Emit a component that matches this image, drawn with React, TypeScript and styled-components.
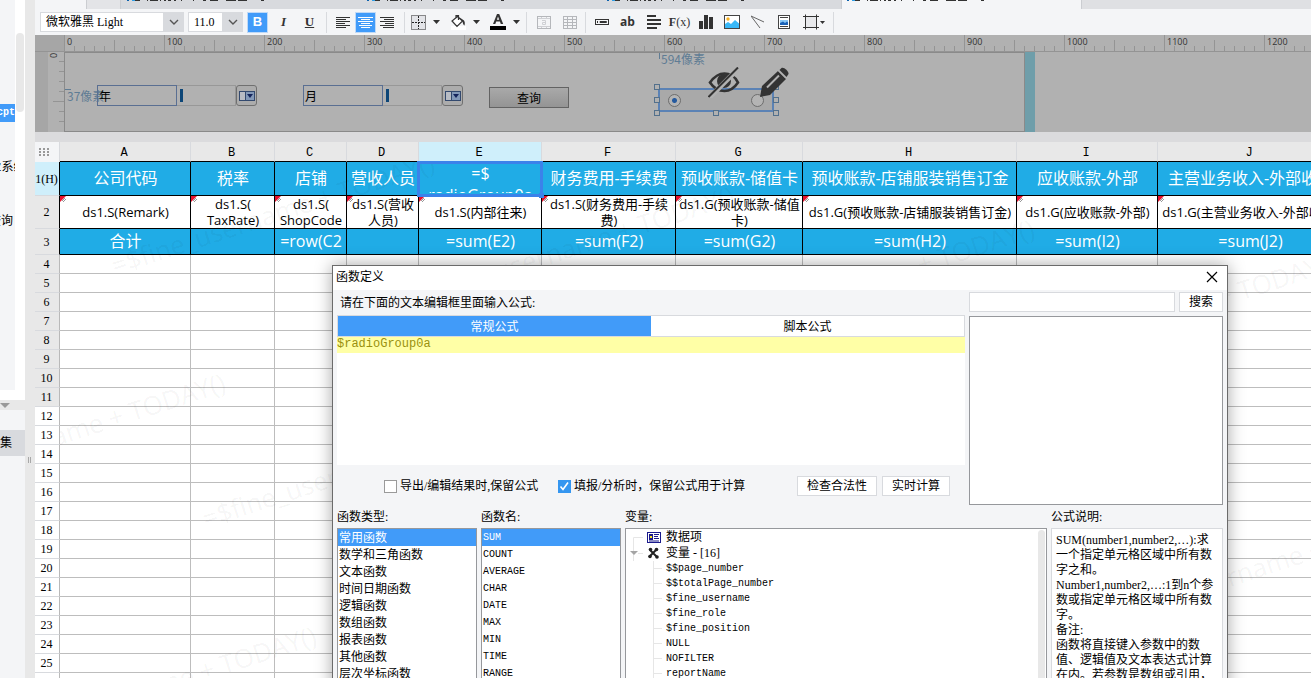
import React from "react";
import styled, { createGlobalStyle, css } from "styled-components";

const uiFont = `"Liberation Serif", "Noto Sans CJK SC", serif`;
const cjkFont = `"Noto Sans CJK SC", "Liberation Sans", sans-serif`;
const monoFont = `"Liberation Mono", "Noto Sans CJK SC", monospace`;
const sheetFont = `"Open Sans", "Noto Sans CJK SC", sans-serif`;

const c = {
  blue: "#419bf9",
  cell: "#20ace6",
  panel: "#f4f5f7",
  line: "#d8dade",
  gutter: "#e8e8e8",
  canvas: "#b1b1b1",
  tick: "#949494",
  steel: "#5a6f92",
};

const Global = createGlobalStyle`
  *, *::before, *::after { box-sizing: border-box; }
  body { margin: 0; overflow: hidden; font: 12px/16px ${uiFont}; color: #000; background: ${c.panel}; }
  button, input, select, textarea { font: inherit; color: inherit; margin: 0; padding: 0; border-radius: 0; outline: none; }
  ul { list-style: none; margin: 0; padding: 0; }
`;

const Shell = styled.div`
  position: relative;
  display: flex;
  height: 100vh;
  overflow: hidden;
`;

/* ---------- left side ---------- */

const Side = styled.aside`
  flex: 0 0 25px;
  display: flex;
  flex-direction: column;
  overflow: hidden;
  white-space: nowrap;
`;
const FileArea = styled.div`
  flex: 0 0 400px;
  display: flex;
  background: #fff;
`;
const FileList = styled.ul`
  flex: 0 0 15px;
  min-width: 0;
  display: flex;
  flex-direction: column;
  gap: 36px;
  height: 390px;
  padding-top: 104px;
  overflow: hidden;
  background: ${c.panel};
`;
const FileRow = styled.li<{ $on?: boolean; $end?: boolean }>`
  display: flex;
  justify-content: ${(p) => (p.$end ? "flex-end" : "center")};
  height: 18px;
  padding-right: ${(p) => (p.$end && !p.$on ? 2 : 0)}px;
  line-height: 18px;
  overflow: hidden;
  ${(p) => p.$on && css`background: ${c.blue}; color: #fff; font: bold 10px/18px ${monoFont};`}
`;
const FileScroll = styled.div`
  flex: 1;
  padding: 33px 1px 0;
  &::before {
    content: "";
    display: block;
    height: 79px;
    border-radius: 4px;
    background: ${c.gutter};
  }
`;
const SideSplit = styled.div`
  flex: 0 0 10px;
  background: ${c.gutter};
  svg { display: block; }
`;
const DataArea = styled.div`
  flex: 1;
  padding-top: 20px;
  background: ${c.panel};
`;
const DataTab = styled.div`
  display: flex;
  justify-content: flex-end;
  padding-right: 13px;
  line-height: 26px;
  background: ${c.line};
`;
const Splitter = styled.div`
  flex: 0 0 10px;
  padding: 457px 0 0 3px;
  background: ${c.gutter};
  &::before {
    content: "";
    display: block;
    width: 3px;
    height: 6px;
    border: solid #a8a8a8;
    border-width: 0 1px;
  }
`;

/* ---------- top bars ---------- */

const Main = styled.main`
  flex: 1;
  min-width: 0;
  display: flex;
  flex-direction: column;
  overflow: hidden;
`;
const TabStrip = styled.div`
  flex: 0 0 9px;
  display: flex;
  background: #dfe0e3;
`;
const Tab = styled.div<{ $w: number; $bg: string; $pad?: number }>`
  flex: 0 0 ${(p) => p.$w}px;
  display: flex;
  gap: 100px;
  padding-left: ${(p) => p.$pad ?? 0}px;
  overflow: hidden;
  background: ${(p) => p.$bg};
  border-right: 1px solid #cbcdd1;
  svg { display: block; flex: none; }
`;
const Toolbar = styled.div`
  flex: 0 0 26px;
  display: flex;
  align-items: center;
  padding-left: 5px;
  background: ${c.panel};
`;
const Combo = styled.label<{ $w: number }>`
  position: relative;
  flex: 0 0 ${(p) => p.$w}px;
  height: 20px;
  margin-right: 4px;
  select {
    appearance: none;
    display: block;
    width: 100%;
    height: 20px;
    padding: 0 20px 0 5px;
    border: 1px solid ${c.line};
    background: linear-gradient(to left, ${c.line} 20px, #fff 20px);
  }
  svg { position: absolute; right: 5px; top: 7px; pointer-events: none; }
`;
const Group = styled.div<{ $gap?: number; $pad?: string }>`
  display: flex;
  gap: ${(p) => p.$gap ?? 5}px;
  padding: ${(p) => p.$pad ?? "0 5px"};
  border-right: 1px solid ${c.line};
  height: 21px;
`;
const Tool = styled.button<{ $on?: boolean; $w?: number; $face?: string }>`
  display: flex;
  align-items: center;
  justify-content: center;
  gap: 7px;
  width: ${(p) => p.$w ?? 21}px;
  height: 21px;
  border: 1px solid ${(p) => (p.$on ? "#bfd9f7" : "transparent")};
  background: ${(p) => (p.$on ? c.blue : "transparent")};
  color: ${(p) => (p.$on ? "#fff" : "#333")};
  font: ${(p) => p.$face ?? `bold 13px/16px ${uiFont}`};
`;

/* ---------- parameter pane ---------- */

const Pane = styled.section`
  flex: 0 0 97px;
  display: flex;
  flex-direction: column;
  background: ${c.canvas};
  svg { display: block; }
`;
const PaneBody = styled.div`
  flex: 1;
  display: flex;
`;
const Margin = styled.div`
  flex: 0 0 13px;
  background: #a6a6a6;
`;
const Canvas = styled.div`
  position: relative;
  flex: 0 0 961px;
  border: 1px solid #8a8a8a;
  font-family: ${cjkFont};
`;
const Resize = styled.div`
  flex: 0 0 10px;
  background: #6f9eaa;
`;
const Placed = styled.div<{ $x: number; $y: number }>`
  position: absolute;
  left: ${(p) => p.$x}px;
  top: ${(p) => p.$y}px;
  display: flex;
`;
const Size = styled(Placed)<{ $side: "top" | "left" }>`
  padding-left: 2px;
  color: #5f7c94;
  line-height: 14px;
  &::before {
    content: "";
    position: absolute;
    left: 0;
    top: ${(p) => (p.$side === "top" ? 1 : 0)}px;
    width: ${(p) => (p.$side === "top" ? 1 : 6)}px;
    height: ${(p) => (p.$side === "top" ? 6 : 1)}px;
    background: #5f7c94;
  }
`;
const LabelBox = styled.label`
  width: 80px;
  height: 21px;
  padding-left: 1px;
  border: 1px solid ${c.steel};
  font-size: 12px;
  line-height: 20px;
`;
const Field = styled.input`
  width: 59px;
  height: 21px;
  border: 1px solid #989898;
  border-left-width: 0;
  background: linear-gradient(#0d4677, #0d4677) 3px 3px / 3px 13px no-repeat;
`;
const Drop = styled.button`
  display: flex;
  align-items: center;
  justify-content: center;
  width: 21px;
  height: 21px;
  border: 1px solid #707070;
  border-radius: 3px;
  background: #acacac;
`;
const Query = styled.button`
  width: 80px;
  height: 21px;
  border: 1px solid #636363;
  background: linear-gradient(#a9a9a9, #949494);
`;
const Radios = styled.div`
  position: relative;
  display: flex;
  align-items: center;
  justify-content: space-between;
  width: 116px;
  height: 24px;
  padding: 0 8px;
  border: 2px solid #5b82b5;
  background: #a9a9a9;
`;
const Radio = styled.input`
  appearance: none;
  width: 13px;
  height: 13px;
  border: 1px solid #6d6d6d;
  border-radius: 50%;
  background: #b4b4b4;
  &:checked { background: radial-gradient(circle, #265a9e 2px, #b4b4b4 3px); }
`;
const Handle = styled.i<{ $x: number; $y: number }>`
  position: absolute;
  left: ${(p) => p.$x}px;
  top: ${(p) => p.$y}px;
  width: 6px;
  height: 6px;
  border: 1px solid #53708c;
  background: #b1b1b1;
`;

/* ---------- sheet ---------- */

const Sheet = styled.section`
  position: relative;
  flex: 1;
  min-height: 0;
  overflow: hidden;
  padding-top: 10px;
  background: linear-gradient(#dbdbdd 10px, #fff 10px);
`;
const Grid = styled.table`
  table-layout: fixed;
  width: 1308px;
  border-collapse: separate;
  border-spacing: 0;
  th, td { padding: 0; }
`;
const ColHead = styled.th<{ $on?: boolean }>`
  && { padding: 4px 2px 0 0; }
  height: 20px;
  font: 12px/15px "Liberation Mono", monospace;
  border-right: 1px solid ${c.line};
  border-bottom: 1px solid #000;
  background: ${(p) => (p.$on ? "#cfeffb" : c.gutter)};
`;
const Corner = styled.th`
  height: 20px;
  border-right: 1px solid ${c.line};
  background: ${c.panel};
  svg { display: block; margin: 0 0 0 4px; }
`;
const RowHead = styled.th<{ $bg: string; $h: number; $dark?: boolean }>`
  && { padding-right: 1px; }
  height: ${(p) => p.$h}px;
  font-weight: 400;
  line-height: 16px;
  border-right: 1px solid ${(p) => (p.$dark ? "#000" : "#b9b9b9")};
  border-bottom: 1px solid ${c.line};
  background: ${(p) => p.$bg};
`;
const Cell = styled.td<{ $kind: "head" | "data" | "sum" | "blank" }>`
  position: relative;
  border: solid ${(p) => (p.$kind === "blank" ? "#bdbdbd" : "#000")};
  border-width: 0 1px 1px 0;
  text-align: center;
  vertical-align: middle;
  ${(p) =>
    (p.$kind === "head" || p.$kind === "sum") &&
    css`&& { padding-bottom: 2px; } background: ${c.cell}; color: #fff; font: 16px/22px ${sheetFont};`}
  ${(p) => p.$kind === "data" && css`font: 13px/16px ${sheetFont};`}
`;
const CellText = styled.div<{ $max: number }>`
  max-height: ${(p) => p.$max}px;
  padding-left: 1px;
  overflow: hidden;
  white-space: pre;
`;
const Mark = styled.svg`
  position: absolute;
  left: 0;
  top: 0;
`;
const Selected = styled.div`
  position: absolute;
  inset: -1px -2px -2px -2px;
  border: 3px solid #3b82ea;
  z-index: 2;
  &::after {
    content: "";
    position: absolute;
    right: -4px;
    bottom: -4px;
    width: 5px;
    height: 5px;
    background: #3b82ea;
  }
`;
const Marks = styled.div`
  position: absolute;
  inset: 29px 0 0 25px;
  overflow: hidden;
  pointer-events: none;
`;
const Watermark = styled.span<{ $x: number; $y: number }>`
  position: absolute;
  left: ${(p) => p.$x}px;
  top: ${(p) => p.$y}px;
  font: 26px/26px "Open Sans", sans-serif;
  color: rgba(0, 0, 0, 0.05);
  white-space: nowrap;
  transform: rotate(-18deg);
  transform-origin: 0 100%;
`;

/* ---------- dialog ---------- */

const Dialog = styled.section`
  position: absolute;
  left: 332px;
  top: 265px;
  width: 896px;
  border: 1px solid #6b6b6b;
  background: ${c.panel};
  box-shadow: 0 0 16px rgba(0, 0, 0, 0.35);
`;
const TitleBar = styled.header`
  display: flex;
  align-items: center;
  justify-content: space-between;
  height: 24px;
  padding: 0 9px 2px 3px;
  background: #fff;
`;
const Close = styled.button`
  display: flex;
  border: 0;
  background: none;
`;
const Upper = styled.div`
  display: flex;
  gap: 4px;
  height: 215px;
  padding: 0 4px;
`;
const EditCol = styled.div`
  flex: 1;
  display: flex;
  flex-direction: column;
`;
const Prompt = styled.label`
  flex: 0 0 25px;
  min-height: 0;
  height: 25px;
  padding-left: 3px;
  line-height: 27px;
`;
const Tabs = styled.div`
  flex: 0 0 22px;
  display: flex;
  border: 1px solid ${c.line};
`;
const TabButton = styled.button<{ $on?: boolean }>`
  flex: 1;
  border: 0;
  padding-top: 2px;
  background: ${(p) => (p.$on ? c.blue : "#fff")};
  color: ${(p) => (p.$on ? "#fff" : "#000")};
`;
const Editor = styled.textarea`
  flex: 0 0 128px;
  display: block;
  border: 0;
  resize: none;
  color: #99910f;
  font: 12px/14px "Liberation Mono", monospace;
  background: linear-gradient(#ffffa6 16px, #fff 16px);
`;
const Options = styled.div`
  flex: 0 0 40px;
  display: flex;
  align-items: center;
  gap: 5px;
  padding: 2px 15px 0 47px;
`;
const Check = styled.label`
  display: flex;
  align-items: center;
  gap: 3px;
  flex: 0 0 169px;
  white-space: nowrap;
`;
const CheckWide = styled(Check)`
  flex: 1;
`;
const Tick = styled.input`
  appearance: none;
  width: 13px;
  height: 13px;
  border: 1px solid #9a9a9a;
  background: #fff;
  &:checked {
    border-color: #3596f0;
    background: #3596f0 url("data:image/svg+xml,%3Csvg xmlns='http://www.w3.org/2000/svg' viewBox='0 0 11 11'%3E%3Cpath d='M1.5 5.5l2.5 3 5-7' fill='none' stroke='white' stroke-width='1.6'/%3E%3C/svg%3E");
  }
`;
const Push = styled.button<{ $w: number }>`
  flex: 0 0 ${(p) => p.$w}px;
  height: 20px;
  border: 1px solid ${c.line};
  background: #fff;
  line-height: 16px;
`;
const SearchCol = styled.div`
  flex: 0 0 254px;
  display: flex;
  flex-direction: column;
  gap: 4px;
  padding-top: 2px;
`;
const SearchRow = styled.div`
  display: flex;
  gap: 4px;
`;
const SearchBox = styled.input`
  flex: 1;
  min-width: 0;
  height: 20px;
  border: 1px solid ${c.line};
  background: #fff;
`;
const Results = styled.div`
  height: 189px;
  border: 1px solid #96989c;
  background: #fff;
`;
const Lower = styled.div`
  display: grid;
  grid-template-columns: 140px 140px 1fr 172px;
  gap: 0 4px;
  padding: 0 4px;
`;
const Caption = styled.div`
  height: 23px;
  line-height: 25px;
`;
const List = styled.ul`
  height: 240px;
  overflow: hidden;
  border: 1px solid #96989c;
  background: #fff;
`;
const Item = styled.li<{ $on?: boolean; $latin?: boolean }>`
  height: 17px;
  padding-left: 1px;
  white-space: nowrap;
  line-height: 19px;
  ${(p) => p.$latin && css`font: 10px/17px ${monoFont};`}
  ${(p) => p.$on && css`background: ${c.blue}; color: #fff;`}
`;
const Tree = styled.div`
  display: flex;
  justify-content: space-between;
  height: 240px;
  overflow: hidden;
  border: 1px solid #96989c;
  background: #fff;
`;
const TreeRoot = styled.ul`
  padding-left: 3px;
`;
const Branch = styled.li`
  display: flex;
  align-items: center;
  gap: 5px;
  height: 16px;
  line-height: 18px;
  svg { display: block; }
`;
const Leaves = styled.ul`
  margin-left: 24px;
  border-left: 1px solid #e6e6e6;
`;
const Leaf = styled.li`
  display: flex;
  align-items: center;
  gap: 4px;
  font: 10px/15px ${monoFont};
  &::before {
    content: "";
    width: 8px;
    height: 1px;
    background: #e6e6e6;
  }
`;
const Thumb = styled.div`
  width: 7px;
  margin: 1px 1px 0;
  border-radius: 4px;
  background: ${c.gutter};
`;
const Explain = styled.div`
  height: 240px;
  padding: 4px;
  overflow: hidden;
  border: 1px solid ${c.line};
  background: #fff;
  line-height: 15px;
  white-space: pre;
`;

/* ---------- drawings ---------- */

const Chevron = () => (
  <svg width="10" height="7" viewBox="0 0 10 7">
    <path d="M1 1l4 4 4-4" fill="none" stroke="#555" strokeWidth="1.4" />
  </svg>
);
const Caret = () => (
  <svg width="7" height="4" viewBox="0 0 7 4">
    <path d="M0 0h7L3.500 4z" fill="#333" />
  </svg>
);
const Lines = ({ rows }: { rows: [number, number][] }) => (
  <svg width="15" height="11" viewBox="0 0 15 11" fill="currentColor">
    {rows.map(([x, w], i) => (
      <rect key={i} x={x} y={i * 2} width={w} height="1" />
    ))}
  </svg>
);
const left: [number, number][] = [[0, 14], [0, 10], [0, 14], [0, 9], [0, 14], [0, 10]];
const center: [number, number][] = [[0, 15], [3, 9], [0, 15], [3, 9], [1, 13], [3, 9]];
const right: [number, number][] = [[0, 14], [4, 10], [0, 14], [5, 9], [0, 14], [3, 11]];

const BorderIcon = () => (
  <svg width="15" height="15" viewBox="0 0 15 15" fill="none" stroke="#222">
    <rect x=".5" y=".5" width="14" height="14" fill="#e3e4e8" strokeDasharray="1 1" />
    <path d="M7.500 1v13M1 7.500h13" strokeDasharray="2 1" />
  </svg>
);
const BucketIcon = () => (
  <svg width="16" height="16" viewBox="0 0 16 16">
    <path d="M1 12h15v4H1z" fill="#fff" />
    <path d="M7.500 2.500L2 7l5 5.500 5.500-5.500zM6 5V1.500h2.500V6" fill="#fff" stroke="#333" strokeWidth="1.200" />
    <path d="M9 3l5 3.500c1 1.500 1 3 .5 5-1-.5-1.500-1.500-2-4z" fill="#333" />
  </svg>
);
const ColorIcon = () => (
  <svg width="16" height="16" viewBox="0 0 16 16" fill="#333">
    <path d="M3 10L7 0h2.200l4 10h-2.400l-.9-2.500H6.200L5.300 10zM6.900 5.800h2.300L8 2.500z" />
    <path d="M0 12h16v4H0z" fill="#000" />
  </svg>
);
const MergeIcon = () => (
  <svg width="14" height="13" viewBox="0 0 14 13" fill="none" stroke="#b5b7bb">
    <rect x=".5" y=".5" width="13" height="12" />
    <path d="M1 2.500h12M1 10.500h12M4.500 1v1M9.500 1v1M4.500 11v1M9.500 11v1" stroke="#cfd0d4" />
    <path d="M5 4.500h3.500v4H5.500v-2h3" stroke="#cfd0d4" />
  </svg>
);
const GridIcon = () => (
  <svg width="14" height="13" viewBox="0 0 14 13" fill="none" stroke="#b5b7bb">
    <rect x=".5" y=".5" width="13" height="12" />
    <path d="M1 3.500h12M1 6.500h12M1 9.500h12M4.500 1v11M9.500 1v11" />
  </svg>
);
const FieldIcon = () => (
  <svg width="14" height="6" viewBox="0 0 14 6" fill="none" stroke="#333">
    <rect x=".5" y=".5" width="13" height="5" />
    <path d="M2.500 2v2M5 2.500h6.500v1H5z" />
  </svg>
);
const ParaIcon = () => (
  <svg width="14" height="14" viewBox="0 0 14 14" fill="#333">
    <path d="M0 0h9v2H0zM0 4h14v2H0zM0 8h14v2H0zM0 12h10v2H0z" />
  </svg>
);
const BarsIcon = () => (
  <svg width="14" height="14" viewBox="0 0 14 14" fill="#333">
    <path d="M0 6h4v8H0zM5 0h4v14H5zM10 2h4v12h-4z" />
  </svg>
);
const ImageIcon = () => (
  <svg width="16" height="14" viewBox="0 0 16 14">
    <rect x=".5" y=".5" width="15" height="13" fill="#fff" stroke="#444" />
    <circle cx="4" cy="4" r="1.700" fill="#f5b021" />
    <path d="M1 13V9l3-2 3 2 4-4 4 3.500V13z" fill="#38b8f8" />
  </svg>
);
const SlashIcon = () => (
  <svg width="14" height="14" viewBox="0 0 14 14" fill="none" stroke="#666">
    <path d="M0 1l13 6M0 1l9 12" />
  </svg>
);
const DocIcon = () => (
  <svg width="12" height="14" viewBox="0 0 12 14">
    <rect x=".5" y=".5" width="11" height="13" fill="#fff" stroke="#444" />
    <path d="M2 2.500h8M2 11.500h8" stroke="#444" />
    <path d="M2 5h8v5H2z" fill="#8ac8f6" />
    <path d="M2 10V8l3-1.500L7 8l2-1.500 1 1V10z" fill="#1a62b8" />
  </svg>
);
const FrameIcon = () => (
  <svg width="22" height="16" viewBox="0 0 22 16">
    <path d="M2.500.5v15M13.500.5v15M0 2.500h16M0 13.500h16" stroke="#333" />
    <path d="M3 3h10v10H3z" fill="#e8e9ec" />
    <path d="M17 7h5l-2.500 3z" fill="#333" />
  </svg>
);
const DropIcon = () => (
  <svg width="16" height="10" viewBox="0 0 16 10">
    <rect x=".5" y=".5" width="15" height="9" fill="#b8bcc4" stroke="#33496e" />
    <path d="M6 1h9v8H6z" fill="#8298b8" />
    <path d="M6.500 1v8" stroke="#33496e" />
    <path d="M8 3h6l-3 4z" fill="#14245c" />
  </svg>
);
const EyeOff = () => (
  <svg width="32" height="31" viewBox="0 0 32 31">
    <path d="M2 15.500C7 8.500 12 6.500 16.500 6.500S27 9 30 15.500c-4 6-9 8.500-13.500 8.500S6 21.500 2 15.500z" fill="none" stroke="#333" strokeWidth="2.600" />
    <circle cx="16" cy="14" r="7" fill="#333" />
    <path d="M1 31L31 1" stroke="#b1b1b1" strokeWidth="5" />
    <path d="M.5 30L30 .5" stroke="#333" strokeWidth="2" />
  </svg>
);
const Pencil = () => (
  <svg width="31" height="31" viewBox="0 0 31 31">
    <path d="M1 30l2-11L19 4l8 8-16 16z" fill="#333" />
    <path d="M20.500 3l2-2c2-1.500 7.500 3 7 6l-2 3z" fill="#333" />
    <path d="M8 20.500L20 8.500" stroke="#b1b1b1" strokeWidth="2" />
    <path d="M19 3.500l8 8" stroke="#b1b1b1" strokeWidth="1" />
  </svg>
);

const TopRuler = () => (
  <svg width="100%" height="17">
    <rect width="30" height="17" fill="#a6a6a6" />
    <path d="M0 16.500h3000" stroke={c.tick} />
    {Array.from({ length: 200 }, (_, i) => (
      <path key={i} d={`M${29.5 + i * 10} ${i % 10 === 0 ? 0 : i % 5 === 0 ? 5 : 11}V17`} stroke={c.tick} />
    ))}
    {Array.from({ length: 13 }, (_, i) => (
      <text key={i} x={32 + i * 100} y="10" fontFamily="Open Sans, sans-serif" fontSize="9" fill="#333">
        {i * 100}
      </text>
    ))}
  </svg>
);
const SideRuler = () => (
  <svg width="16" height="80">
    {Array.from({ length: 8 }, (_, i) => (
      <path key={i} d={`M${i === 5 ? 5 : 11} ${i * 10 - 0.5}H16`} stroke={c.tick} />
    ))}
    <text x="-6" y="9" transform="rotate(-90)" fontFamily="Open Sans, sans-serif" fontSize="9" fill="#333">
      0
    </text>
  </svg>
);
const TabTrace = () => (
  <svg width="140" height="1">
    <path d="M0 .5h2" stroke="#0d62ad" />
    <path d="M5 .5h3" stroke="#2f9fe8" />
    <path d="M8 .5h5M20 .5h1M23 .5h8M33 .5h1M37 .5h2M41 .5h3M47 .5h2M54 .5h1M66 .5h1M76 .5h3M83 .5h8M99 .5h10M111 .5h9M134 .5h3" stroke="#333" />
  </svg>
);

/* ---------- content ---------- */

const columns = [
  { name: "A", w: 131, head: "公司代码", data: "ds1.S(Remark)", sum: "合计" },
  { name: "B", w: 84, head: "税率", data: "ds1.S(\nTaxRate)", sum: "" },
  { name: "C", w: 72, head: "店铺", data: "ds1.S(\nShopCode", sum: "=row(C2" },
  { name: "D", w: 72, head: "营收人员", data: "ds1.S(营收\n人员)", sum: "" },
  { name: "E", w: 123, head: "=$\nradioGroup0a", data: "ds1.S(内部往来)", sum: "=sum(E2)" },
  { name: "F", w: 134, head: "财务费用-手续费", data: "ds1.S(财务费用-手续\n费)", sum: "=sum(F2)" },
  { name: "G", w: 127, head: "预收账款-储值卡", data: "ds1.G(预收账款-储值\n卡)", sum: "=sum(G2)" },
  { name: "H", w: 214, head: "预收账款-店铺服装销售订金", data: "ds1.G(预收账款-店铺服装销售订金)", sum: "=sum(H2)" },
  { name: "I", w: 141, head: "应收账款-外部", data: "ds1.G(应收账款-外部)", sum: "=sum(I2)" },
  { name: "J", w: 185, head: "主营业务收入-外部收入", data: "ds1.G(主营业务收入-外部收入)", sum: "=sum(J2)" },
];
const blankRows = Array.from({ length: 23 }, (_, i) => i + 4);

const marks: [number, number][] = [
  [113, 272], [413, 305], [713, 338], [1013, 371],
  [-96, 492], [204, 525], [1104, 624], [-5, 745],
];

const kinds = ["常用函数", "数学和三角函数", "文本函数", "时间日期函数", "逻辑函数", "数组函数", "报表函数", "其他函数", "层次坐标函数"];
const names = ["SUM", "COUNT", "AVERAGE", "CHAR", "DATE", "MAX", "MIN", "TIME", "RANGE"];
const vars = ["$$page_number", "$$totalPage_number", "$fine_username", "$fine_role", "$fine_position", "NULL", "NOFILTER", "reportName"];
const explain = [
  "SUM(number1,number2,…):求",
  "一个指定单元格区域中所有数",
  "字之和。",
  "Number1,number2,…:1到n个参",
  "数或指定单元格区域中所有数",
  "字。",
  "备注:",
  "函数将直接键入参数中的数",
  "值、逻辑值及文本表达式计算",
  "在内。若参数是数组或引用，",
].join("\n");

const FormField = ({ x, label, id }: { x: number; label: string; id: string }) => (
  <Placed $x={x} $y={32}>
    <LabelBox htmlFor={id}>{label}</LabelBox>
    <Field id={id} />
    <Drop aria-label={label}>
      <DropIcon />
    </Drop>
  </Placed>
);

const handles: [number, number][] = [
  [-6, -6], [113, -6], [-6, 7], [113, 7], [-6, 20], [53, 20], [113, 20],
];

export default function App() {
  return (
    <Shell>
      <Global />
      <Side>
        <FileArea>
          <FileList>
            <FileRow $on $end>cpt</FileRow>
            <FileRow>业系统</FileRow>
            <FileRow $end>查询</FileRow>
          </FileList>
          <FileScroll />
        </FileArea>
        <SideSplit>
          <svg width="10" height="10" viewBox="0 0 10 10">
            <path d="M0 3h10L5 8z" fill="#999" />
          </svg>
        </SideSplit>
        <DataArea>
          <DataTab>数据集</DataTab>
        </DataArea>
      </Side>
      <Splitter />

      <Main>
        <TabStrip>
          <Tab $w={52} $bg={c.panel} />
          <Tab $w={34} $bg="#e3e4e7" />
          <Tab $w={721} $bg={c.line} $pad={6}>
            <TabTrace />
            <TabTrace />
            <TabTrace />
          </Tab>
          <Tab $w={240} $bg={c.panel} $pad={5}>
            <TabTrace />
          </Tab>
        </TabStrip>

        <Toolbar>
          <Combo $w={144}>
            <select aria-label="字体" defaultValue="微软雅黑 Light">
              <option>微软雅黑 Light</option>
            </select>
            <Chevron />
          </Combo>
          <Combo $w={55}>
            <select aria-label="字号" defaultValue="11.0">
              <option>11.0</option>
            </select>
            <Chevron />
          </Combo>
          <Group $pad="0 6px 0 0">
            <Tool $on $face={`bold 13px/16px "Liberation Sans", sans-serif`}>B</Tool>
            <Tool $face={`italic bold 13px/16px ${uiFont}`}>I</Tool>
            <Tool>
              <u>U</u>
            </Tool>
          </Group>
          <Group $gap={1} $pad="0 6px">
            <Tool aria-label="左对齐"><Lines rows={left} /></Tool>
            <Tool $on aria-label="居中"><Lines rows={center} /></Tool>
            <Tool aria-label="右对齐"><Lines rows={right} /></Tool>
          </Group>
          <Group $gap={0} $pad="0 1px 0 0">
            <Tool $w={40} aria-label="边框"><BorderIcon /><Caret /></Tool>
            <Tool $w={40} aria-label="填充"><BucketIcon /><Caret /></Tool>
            <Tool $w={40} aria-label="颜色"><ColorIcon /><Caret /></Tool>
          </Group>
          <Group $pad="0 5px 0 6px">
            <Tool aria-label="合并"><MergeIcon /></Tool>
            <Tool aria-label="拆分"><GridIcon /></Tool>
          </Group>
          <Group>
            <Tool aria-label="控件"><FieldIcon /></Tool>
            <Tool $face={`bold 12px/16px "Open Sans", sans-serif`}>ab</Tool>
            <Tool aria-label="富文本"><ParaIcon /></Tool>
            <Tool $face={`12px/16px ${uiFont}`}><span><b>F</b>(x)</span></Tool>
            <Tool aria-label="图表"><BarsIcon /></Tool>
            <Tool aria-label="图片"><ImageIcon /></Tool>
            <Tool aria-label="斜线"><SlashIcon /></Tool>
            <Tool aria-label="子报表"><DocIcon /></Tool>
            <Tool $w={29} aria-label="悬浮元素"><FrameIcon /></Tool>
          </Group>
        </Toolbar>

        <Pane>
          <TopRuler />
          <PaneBody>
            <Margin />
            <SideRuler />
            <Canvas>
              <Size $side="left" $x={0} $y={36}>37像素</Size>
              <FormField x={32} label="年" id="year" />
              <FormField x={238} label="月" id="month" />
              <Placed $x={424} $y={34}>
                <Query>查询</Query>
              </Placed>
              <Size $side="top" $x={594} $y={-1}>594像素</Size>
              <Placed $x={593} $y={35}>
                <Radios>
                  <Radio type="radio" name="group" aria-label="1" defaultChecked />
                  <Radio type="radio" name="group" aria-label="2" />
                  {handles.map(([x, y]) => (
                    <Handle key={`${x},${y}`} $x={x} $y={y} />
                  ))}
                </Radios>
              </Placed>
              <Placed $x={643} $y={14}><EyeOff /></Placed>
              <Placed $x={694} $y={14}><Pencil /></Placed>
            </Canvas>
            <Resize />
          </PaneBody>
        </Pane>

        <Sheet>
          <Grid>
            <colgroup>
              <col style={{ width: 25 }} />
              {columns.map((k) => (
                <col key={k.name} style={{ width: k.w }} />
              ))}
            </colgroup>
            <thead>
              <tr>
                <Corner>
                  <svg width="11" height="8" viewBox="0 0 11 8" fill="#999">
                    {[0, 4, 8].map((x) => [0, 3, 6].map((y) => <rect key={`${x}${y}`} x={x} y={y} width="2" height="2" />))}
                  </svg>
                </Corner>
                {columns.map((k) => (
                  <ColHead key={k.name} $on={k.name === "E"}>{k.name}</ColHead>
                ))}
              </tr>
            </thead>
            <tbody>
              <tr>
                <RowHead $bg="#cfeffb" $h={34} $dark>1(H)</RowHead>
                {columns.map((k) => (
                  <Cell key={k.name} $kind="head">
                    <CellText $max={31}>{k.head}</CellText>
                    {k.name === "E" && <Selected />}
                  </Cell>
                ))}
              </tr>
              <tr>
                <RowHead $bg={c.gutter} $h={33} $dark>2</RowHead>
                {columns.map((k) => (
                  <Cell key={k.name} $kind="data">
                    <Mark width="6" height="6" viewBox="0 0 6 6">
                      <path d="M0 0h6L0 6z" fill="#e8112d" />
                      <path d="M2 5l3-3M3 6l3-3" stroke="#999" />
                    </Mark>
                    <CellText $max={32}>{k.data}</CellText>
                  </Cell>
                ))}
              </tr>
              <tr>
                <RowHead $bg={c.gutter} $h={26} $dark>3</RowHead>
                {columns.map((k) => (
                  <Cell key={k.name} $kind="sum">
                    <CellText $max={23}>{k.sum}</CellText>
                  </Cell>
                ))}
              </tr>
              {blankRows.map((n) => (
                <tr key={n}>
                  <RowHead $bg={n < 12 ? c.gutter : "#fff"} $h={19}>{n}</RowHead>
                  {columns.map((k) => (
                    <Cell key={k.name} $kind="blank" />
                  ))}
                </tr>
              ))}
            </tbody>
          </Grid>
          <Marks>
            {marks.map(([x, y]) => (
              <Watermark key={x} $x={x - 57} $y={y - 181}>=$fine_username + TODAY()</Watermark>
            ))}
          </Marks>
        </Sheet>
      </Main>

      <Dialog role="dialog" aria-label="函数定义">
        <TitleBar>
          函数定义
          <Close aria-label="关闭">
            <svg width="12" height="12" viewBox="0 0 12 12">
              <path d="M1 1l10 10M11 1L1 11" stroke="#000" strokeWidth="1.200" />
            </svg>
          </Close>
        </TitleBar>
        <Upper>
          <EditCol>
            <Prompt htmlFor="formula">请在下面的文本编辑框里面输入公式:</Prompt>
            <Tabs>
              <TabButton $on>常规公式</TabButton>
              <TabButton>脚本公式</TabButton>
            </Tabs>
            <Editor id="formula" spellCheck={false} defaultValue="$radioGroup0a" />
            <Options>
              <Check>
                <Tick type="checkbox" />
                导出/编辑结果时,保留公式
              </Check>
              <CheckWide>
                <Tick type="checkbox" defaultChecked />
                填报/分析时，保留公式用于计算
              </CheckWide>
              <Push $w={80}>检查合法性</Push>
              <Push $w={68}>实时计算</Push>
            </Options>
          </EditCol>
          <SearchCol>
            <SearchRow>
              <SearchBox aria-label="搜索函数" />
              <Push $w={44}>搜索</Push>
            </SearchRow>
            <Results />
          </SearchCol>
        </Upper>
        <Lower>
          <Caption>函数类型:</Caption>
          <Caption>函数名:</Caption>
          <Caption>变量:</Caption>
          <Caption>公式说明:</Caption>
          <List>
            {kinds.map((k, i) => (
              <Item key={k} $on={i === 0}>{k}</Item>
            ))}
          </List>
          <List>
            {names.map((k, i) => (
              <Item key={k} $on={i === 0} $latin>{k}</Item>
            ))}
          </List>
          <Tree>
            <TreeRoot>
              <Branch>
                <svg width="32" height="16" viewBox="0 0 32 16">
                  <path d="M4.500 16V8.500H14" fill="none" stroke="#e6e6e6" />
                  <rect x="18.500" y="3.500" width="13" height="10" fill="#fff" stroke="#1a1a8c" />
                  <path d="M20 5h4v6h-4z" fill="#1a1a8c" />
                  <path d="M21 7h2v2h-2z" fill="#f7e32a" />
                  <path d="M25 5.500h5M25 7.500h4M25 9.500h5M20 12h10" stroke="#1a1a8c" />
                </svg>
                数据项
              </Branch>
              <Branch>
                <svg width="32" height="16" viewBox="0 0 32 16">
                  <path d="M4.500 0v16M9 8.500h5" stroke="#e6e6e6" />
                  <path d="M1 6h8l-4 4z" fill="#a5a5a5" />
                  <path d="M21 5l7 7M28 4l-8 8" stroke="#222" strokeWidth="2" />
                  <circle cx="21.500" cy="4.500" r="1.800" fill="#222" />
                  <circle cx="27.500" cy="4.500" r="1.800" fill="#222" />
                  <circle cx="21" cy="11.500" r="1.800" fill="#222" />
                  <circle cx="28" cy="12" r="1.800" fill="#222" />
                </svg>
                变量 - [16]
              </Branch>
              <Leaves>
                {vars.map((v) => (
                  <Leaf key={v}>{v}</Leaf>
                ))}
              </Leaves>
            </TreeRoot>
            <Thumb />
          </Tree>
          <Explain>{explain}</Explain>
        </Lower>
      </Dialog>
    </Shell>
  );
}
